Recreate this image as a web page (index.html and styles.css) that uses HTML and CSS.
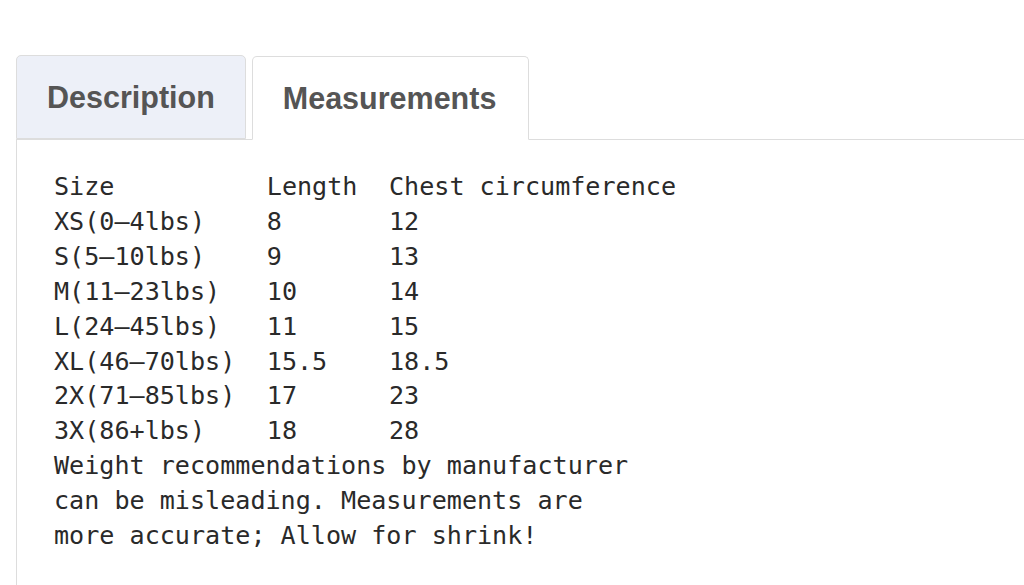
FILE: index.html
```html
<!DOCTYPE html>
<html lang="en">
<head>
<meta charset="utf-8">
<title>Measurements</title>
<link rel="stylesheet" href="styles.css">
</head>
<body>
<div class="page">
  <ul class="tabs">
    <li class="tab">Description</li>
    <li class="tab tab-active">Measurements</li>
  </ul>
  <div class="panel">
    <table class="sizes">
      <tr><td>Size</td><td>Length</td><td>Chest circumference</td></tr>
      <tr><td>XS(0–4lbs)</td><td>8</td><td>12</td></tr>
      <tr><td>S(5–10lbs)</td><td>9</td><td>13</td></tr>
      <tr><td>M(11–23lbs)</td><td>10</td><td>14</td></tr>
      <tr><td>L(24–45lbs)</td><td>11</td><td>15</td></tr>
      <tr><td>XL(46–70lbs)</td><td>15.5</td><td>18.5</td></tr>
      <tr><td>2X(71–85lbs)</td><td>17</td><td>23</td></tr>
      <tr><td>3X(86+lbs)</td><td>18</td><td>28</td></tr>
    </table>
    <p class="note">Weight recommendations by manufacturer<br>can be misleading. Measurements are<br>more accurate; Allow for shrink!</p>
  </div>
</div>
</body>
</html>
```
FILE: styles.css
```css
html, body {
  margin: 0;
  padding: 0;
  background: #ffffff;
  overflow: hidden;
}

.page {
  box-sizing: border-box;
  height: 585px;
  padding: 55px 0 0 16px;
  display: flex;
  flex-direction: column;
}

.tabs {
  list-style: none;
  margin: 0;
  padding: 0;
  display: flex;
  gap: 6px;
  align-items: flex-end;
}

.tab {
  font-family: "Liberation Sans", Arial, sans-serif;
  font-weight: bold;
  font-size: 30.5px;
  line-height: 34px;
  color: #555555;
  padding: 24px 30px;
  background: #edf0f8;
  border: 1px solid #dddddd;
  border-radius: 5px 5px 0 0;
}

.tab-active {
  background: #ffffff;
  border-bottom-color: #ffffff;
  margin-bottom: -1px;
  padding-right: 32px;
  position: relative;
}

.panel {
  flex: 1;
  border-top: 1px solid #dddddd;
  border-left: 1px solid #dddddd;
  padding: 30px 0 0 37px;
  font-family: "DejaVu Sans Mono", "Liberation Mono", monospace;
  font-size: 25.1px;
  line-height: 34.9px;
  color: #2a2a2a;
}

.sizes {
  border-collapse: collapse;
  border-spacing: 0;
}

.sizes td {
  padding: 0 31.5px 0 0;
  vertical-align: top;
  white-space: nowrap;
}

.sizes td:last-child {
  padding-right: 0;
}

.note {
  margin: 0;
}
```
